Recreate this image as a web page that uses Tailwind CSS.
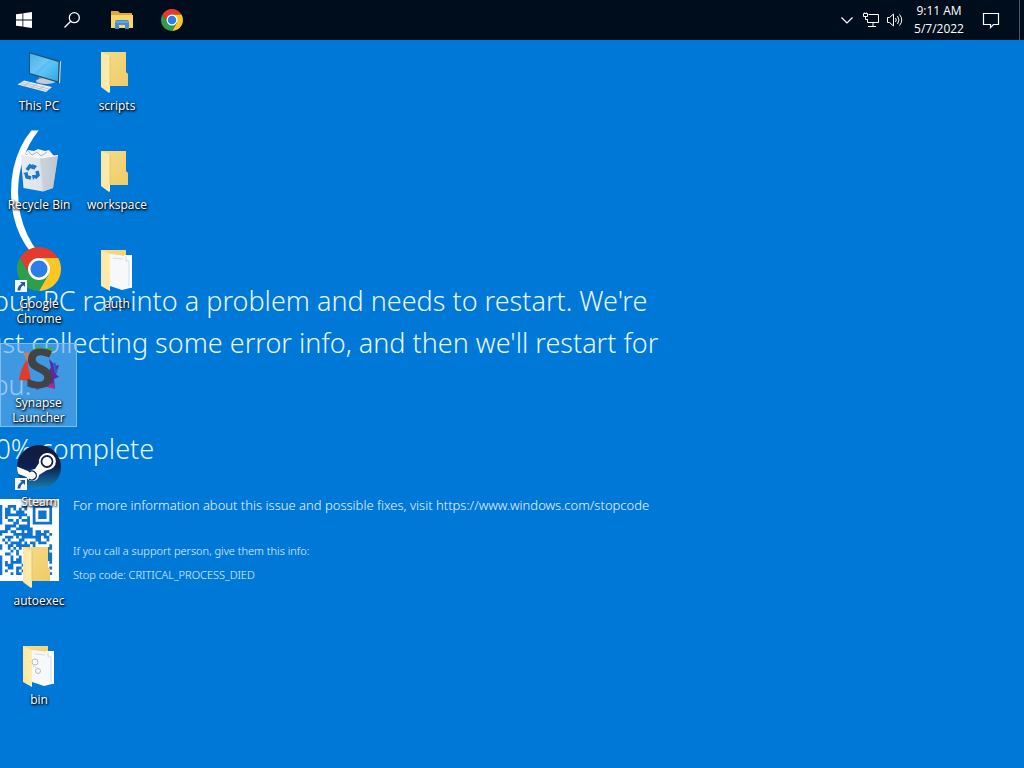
<!DOCTYPE html>
<html lang="en">
<head>
<meta charset="utf-8">
<title>Desktop</title>
<script src="https://cdn.jsdelivr.net/npm/@tailwindcss/browser@4"></script>
</head>
<body class="flex min-h-screen flex-col overflow-hidden bg-[#0078d7] font-['Open_Sans','Noto_Sans',sans-serif] text-white">

<svg class="absolute size-0" aria-hidden="true">
  <defs>
    <linearGradient id="fold" x1="0" y1="0" x2="1" y2="1"><stop offset="0" stop-color="#f5dc8c"/><stop offset="1" stop-color="#f0cb66"/></linearGradient>
    <linearGradient id="flap" x1="0" y1="0" x2="1" y2="0"><stop offset="0" stop-color="#fbe7a2"/><stop offset="1" stop-color="#ffedb0"/></linearGradient>
    <linearGradient id="screen" x1="0" y1="0" x2="1" y2="1"><stop offset="0" stop-color="#2ba3e8"/><stop offset=".55" stop-color="#5cc4f4"/><stop offset="1" stop-color="#2fa4e6"/></linearGradient>
    <linearGradient id="steamg" x1="0" y1="0" x2="0" y2="1"><stop offset="0" stop-color="#151a3a"/><stop offset=".5" stop-color="#0d2050"/><stop offset="1" stop-color="#1580b6"/></linearGradient>
    <linearGradient id="bing" x1="0" y1="0" x2="1" y2="0"><stop offset="0" stop-color="#e9edf2"/><stop offset=".6" stop-color="#dce2e8"/><stop offset="1" stop-color="#aeb9c4"/></linearGradient>
    <symbol id="folder" viewBox="0 0 48 48">
      <path d="M8 4h25v20l2 2v12H16L8 34z" fill="url(#fold)"/>
      <path d="M8 4l9 4v36l-1 1-8-6z" fill="url(#flap)"/>
      <path d="M17 8v30" stroke="#e3bd5c" stroke-width=".8"/>
    </symbol>
    <symbol id="folder-full" viewBox="0 0 48 48">
      <path d="M8 4h25v30H8z" fill="url(#fold)"/>
      <path d="M31 9h8v33l-8-1z" fill="#fff"/>
      <path d="M17 8l16 2 4 5v27l-8 2-12-4z" fill="#f6f8fa"/>
      <path d="M33 10v5h4M20 12l10 1M36 16v24" fill="none" stroke="#cdd6de" stroke-width=".8"/>
      <path d="M8 4l9 4v37l-9-5z" fill="url(#flap)"/>
    </symbol>
    <symbol id="chrome" viewBox="0 0 44 44">
      <path d="M2.950 11A22 22 0 0 1 41.050 11H22L12.500 27.500z" fill="#e33b2e"/>
      <path d="M41.050 11A22 22 0 0 1 22 44L31.500 27.500 22 11z" fill="#fcc624"/>
      <path d="M2.950 11A22 22 0 0 0 22 44L31.500 27.500 12.500 27.500z" fill="#2f9e4c"/>
      <circle cx="22" cy="22" r="11" fill="#fff"/><circle cx="22" cy="22" r="8.500" fill="#2b7de9"/>
    </symbol>
    <symbol id="shortcut" viewBox="0 0 12 12">
      <path d="M0 0h12v12H0z" fill="#f4f7fa"/><path d="M5 2h5v5L8.300 5.300C6.500 6.500 5.500 8 5.300 10.500H2.500C2.500 7.500 4 5 6.700 3.700z" fill="#24579b"/>
    </symbol>
  </defs>
</svg>

<header class="relative z-20 flex h-10 items-stretch justify-between bg-[#000d1c]">
  <nav class="flex" aria-label="Taskbar">
    <button class="grid w-12 place-items-center" aria-label="Start">
      <svg class="size-4" viewBox="0 0 16 16" fill="#fff"><path d="M0 2.300L6.500 1.400V7.600H0zM7.300 1.300L16 0V7.600H7.300zM0 8.400H6.500V14.600L0 13.700zM7.300 8.400H16V16L7.300 14.700z"/></svg>
    </button>
    <button class="grid w-12 place-items-center" aria-label="Search">
      <svg class="size-4" viewBox="0 0 16 16" fill="none" stroke="#fff" stroke-width="1.300"><circle cx="10.300" cy="5.700" r="5"/><path d="M6.700 9.300L.5 15.500"/></svg>
    </button>
    <button class="grid w-[52px] place-items-center" aria-label="File Explorer">
      <svg class="h-5 w-6" viewBox="0 0 24 20"><path d="M1 1h7l2 2h12v4H1z" fill="#e0a92f"/><path d="M1 5h22v13H1z" fill="#fbd667"/><path d="M5 19v-7q0-2 2-2h10q2 0 2 2v7h-4v-4H9v4z" fill="#3f8fd6"/><path d="M5 11h14v2H5z" fill="#5aa5e2"/></svg>
    </button>
    <button class="grid w-12 place-items-center" aria-label="Google Chrome"><svg class="size-[22px]"><use href="#chrome"/></svg></button>
  </nav>
  <div class="flex items-stretch">
    <button class="grid w-6 place-items-center" aria-label="Show hidden icons"><svg class="size-3" viewBox="0 0 12 12" fill="none" stroke="#fff" stroke-width="1.200"><path d="M.5 3.500L6 9l5.500-5.500"/></svg></button>
    <button class="grid w-6 place-items-center" aria-label="Network"><svg class="size-4" viewBox="0 0 16 16" fill="none" stroke="#fff"><path d="M5.500 2.500h10v8H4.500V7M10 10.500v4M5 14.500h8M.5 1.500h4v3h-4zM2.500 4.500v3h2M1.500 1.500v-1M3.500 1.500v-1"/></svg></button>
    <button class="grid w-6 place-items-center" aria-label="Volume"><svg class="h-4 w-[18px]" viewBox="0 0 18 16" fill="none" stroke="#fff"><path d="M1.500 5.500h2l4-3.500v12l-4-3.500h-2zM9.500 6q1.500 2 0 4M11.500 4q3 4 0 8M13.500 2.500q4.500 5.500 0 11"/></svg></button>
    <button class="w-16 text-center text-xs leading-[18px]"><time datetime="2022-05-07T09:11">9:11 AM<br>5/7/2022</time></button>
    <button class="grid w-10 place-items-center" aria-label="Notifications"><svg class="size-[18px]" viewBox="0 0 18 18" fill="none" stroke="#fff" stroke-width="1.200"><path d="M1.500 2.500h15v11h-5L8.500 16.500V13.500h-7z"/></svg></button>
    <button class="ml-2 w-[5px] border-l border-[#4a5663]" aria-label="Show desktop"></button>
  </div>
</header>

<main class="relative grow">
  <!-- wallpaper, shifted past the left screen edge -->
  <section class="absolute inset-x-0 top-0 -left-6 font-['Noto_Sans','Open_Sans',sans-serif] font-light text-[#e6f7ff]">
    <p class="-ml-1 h-60 pt-[67px] font-['Open_Sans',sans-serif] text-[140px] leading-[140px] whitespace-nowrap text-white">:(</p>
    <div class="ml-1 text-[27px] leading-[42px]">
      <p class="whitespace-nowrap">Your PC ran into a problem and needs to restart. We're<br>just collecting some error info, and then we'll restart for<br>you.</p>
      <p class="mt-[22px]">20% complete</p>
    </div>
    <div class="mt-[29px] flex gap-[14px]">
      <svg id="qr" class="h-[82px] w-[83px] shrink-0 bg-white" viewBox="-2.500 -2.150 30 29.300" preserveAspectRatio="none" role="img" aria-label="QR code"><path fill="#0f74cf"/></svg>
      <div class="text-[11px] leading-6 whitespace-nowrap">
        <p class="-mt-[6px] mb-[22px] text-[13px] leading-6">For more information about this issue and possible fixes, visit https://www.windows.com/stopcode</p>
        <p>If you call a support person, give them this info:</p>
        <p>Stop code: CRITICAL_PROCESS_DIED</p>
      </div>
    </div>
  </section>

  <div class="relative grid w-fit grid-flow-col auto-cols-[78px] grid-rows-[repeat(7,84px)] gap-y-[15px] pt-[6px] text-xs leading-[15px] [&_span]:mt-[2px] [&_span]:[text-shadow:1px_1px_2px_#000,0_1px_3px_#000]">
    <button class="flex flex-col items-center pt-[2px]">
      <svg class="size-12" viewBox="0 0 48 48"><path d="M24 28l8 2v4l-8-2z" fill="#8e9aa5"/><ellipse cx="31" cy="33" rx="10" ry="3" fill="#c4ccd3"/><path d="M14 4l31 9-1 22-30-9z" fill="#23506f"/><path d="M45 13l1 .5-1 22-1-.5z" fill="#d5dce2"/><path d="M15 5.500l28.500 8.500-.7 19.300L15 25z" fill="url(#screen)"/><path d="M15 5.500l20 6L18 26l-3-1z" fill="#fff" opacity=".15"/><path d="M9 32.500l28 6.500-6 5L2.500 36.500z" fill="#e8ecef"/><path d="M7 34l27 7M5 35.500l27 7M15 34l-6 4M22 36l-6 4M29 38l-6 4" stroke="#a7b1ba" stroke-width=".7"/></svg>
      <span>This PC</span>
    </button>
    <button class="flex flex-col items-center pt-[2px]">
      <svg class="size-12" viewBox="0 0 48 48"><path d="M8 8l5-5 6 1 4-2 7 2 4-1 5 6-2 4H9z" fill="#f2f4f6"/><path d="M13 4l4 4 5-3 4 4 6-4M10 7l7 3" stroke="#a9b4bf" fill="none"/><path d="M5.500 7l17 3.500 20.500-2-5 32.500-10 3.500L8.500 41z" fill="url(#bing)"/><path d="M25 11l18-2.500-5 32.500-10 3.500z" fill="#c3ccd5" opacity=".75"/><path d="M5.500 7l19 4 18.500-2.500" stroke="#fff" fill="none"/><g fill="none" stroke="#1976c9" stroke-width="3.500"><path d="M12 23l3-4 4 2M22 24l1 4-3 3M16 31l-4-1-1-3"/></g><path d="M17 17l5 2-3 4zM22 28l-4 5-1-5zM8 26l5-1-1 4z" fill="#1976c9"/></svg>
      <span>Recycle Bin</span>
    </button>
    <button class="flex flex-col items-center pt-[2px]">
      <svg class="size-12" viewBox="0 0 48 48"><use href="#chrome" x="2" y="1" width="44" height="44"/><use href="#shortcut" x="0" y="34" width="12" height="12"/></svg>
      <span>Google<br>Chrome</span>
    </button>
    <button class="mr-px flex flex-col items-center border border-[#80bdf0] bg-[#68aeea]/60 pt-px">
      <svg class="size-12" viewBox="0 0 48 48"><path d="M18 5l6-5 3 4 11-2-2 8z" fill="#3fae4a"/><path d="M8 8l12-1-6 12z" fill="#d0834c"/><path d="M12 15l4 21-12-1q2-13 8-20z" fill="#e23b2e"/><path d="M34 14l6 6-4 3zM36 22l8-2-3 9 3 3-5 2 1 9-14-2z" fill="#5b2a9e"/><path d="M39 18l2 10" stroke="#2a5fc4" stroke-width="3"/><path d="M18 39l10 3-6 3zM28 41l11-3 1 6z" fill="#a62c92"/><text x="10" y="43" font-family="Open Sans, sans-serif" font-size="53" font-weight="700" fill="#414347">S</text></svg>
      <span>Synapse<br>Launcher</span>
    </button>
    <button class="flex flex-col items-center pt-[2px]">
      <svg class="size-12" viewBox="0 0 48 48"><circle cx="24" cy="23" r="22" fill="url(#steamg)"/><path d="M2 22.500L14 27.500Q17 25 20 25L24 19A8.500 8.500 0 1 1 32 26L24 31A6.500 6.500 0 0 1 11.500 33L3.500 30Q2 27 2 22.500z" fill="#fff"/><circle cx="32" cy="17.500" r="5.500" fill="#fff" stroke="#16234b" stroke-width="1.800"/><path d="M14 28a4.500 4.500 0 1 1 0 7" fill="none" stroke="#16234b" stroke-width="1.300"/><use href="#shortcut" x="0" y="34" width="12" height="12"/></svg>
      <span>Steam</span>
    </button>
    <button class="flex flex-col items-center pt-[2px]"><svg class="size-12"><use href="#folder"/></svg><span>autoexec</span></button>
    <button class="flex flex-col items-center pt-[2px]">
      <svg class="size-12" viewBox="0 0 48 48"><use href="#folder-full" width="48" height="48"/><g fill="none" stroke="#b4bdc5"><circle cx="20" cy="20" r="3"/><circle cx="23" cy="29" r="2.500"/><path d="M18 24l4 2" stroke-dasharray="1 1"/></g></svg>
      <span>bin</span>
    </button>
    <button class="flex flex-col items-center pt-[2px]"><svg class="size-12"><use href="#folder"/></svg><span>scripts</span></button>
    <button class="flex flex-col items-center pt-[2px]"><svg class="size-12"><use href="#folder"/></svg><span>workspace</span></button>
    <button class="flex flex-col items-center pt-[2px]"><svg class="size-12"><use href="#folder-full"/></svg><span>auth</span></button>
  </div>
</main>

<script>
  // 25 x 25 module code: three finder squares, one alignment square, data elsewhere
  let seed = 41, d = '';
  const ring = (x, y, cx, cy) => Math.max(Math.abs(x - cx), Math.abs(y - cy));
  for (let y = 0; y < 25; y++) for (let x = 0; x < 25; x++) {
    seed = (seed * 1103515245 + 12345) % 2147483648;
    let on = seed / 2147483648 > 0.48;
    for (const [cx, cy] of [[3, 3], [21, 3], [3, 21]]) {
      const r = ring(x, y, cx, cy);
      if (r <= 4) on = r === 3 || r <= 1;
    }
    const a = ring(x, y, 18, 18);
    if (a <= 2) on = a !== 1;
    if (on) d += `M${x} ${y}h1v1h-1z`;
  }
  document.querySelector('#qr path').setAttribute('d', d);
</script>
</body>
</html>
